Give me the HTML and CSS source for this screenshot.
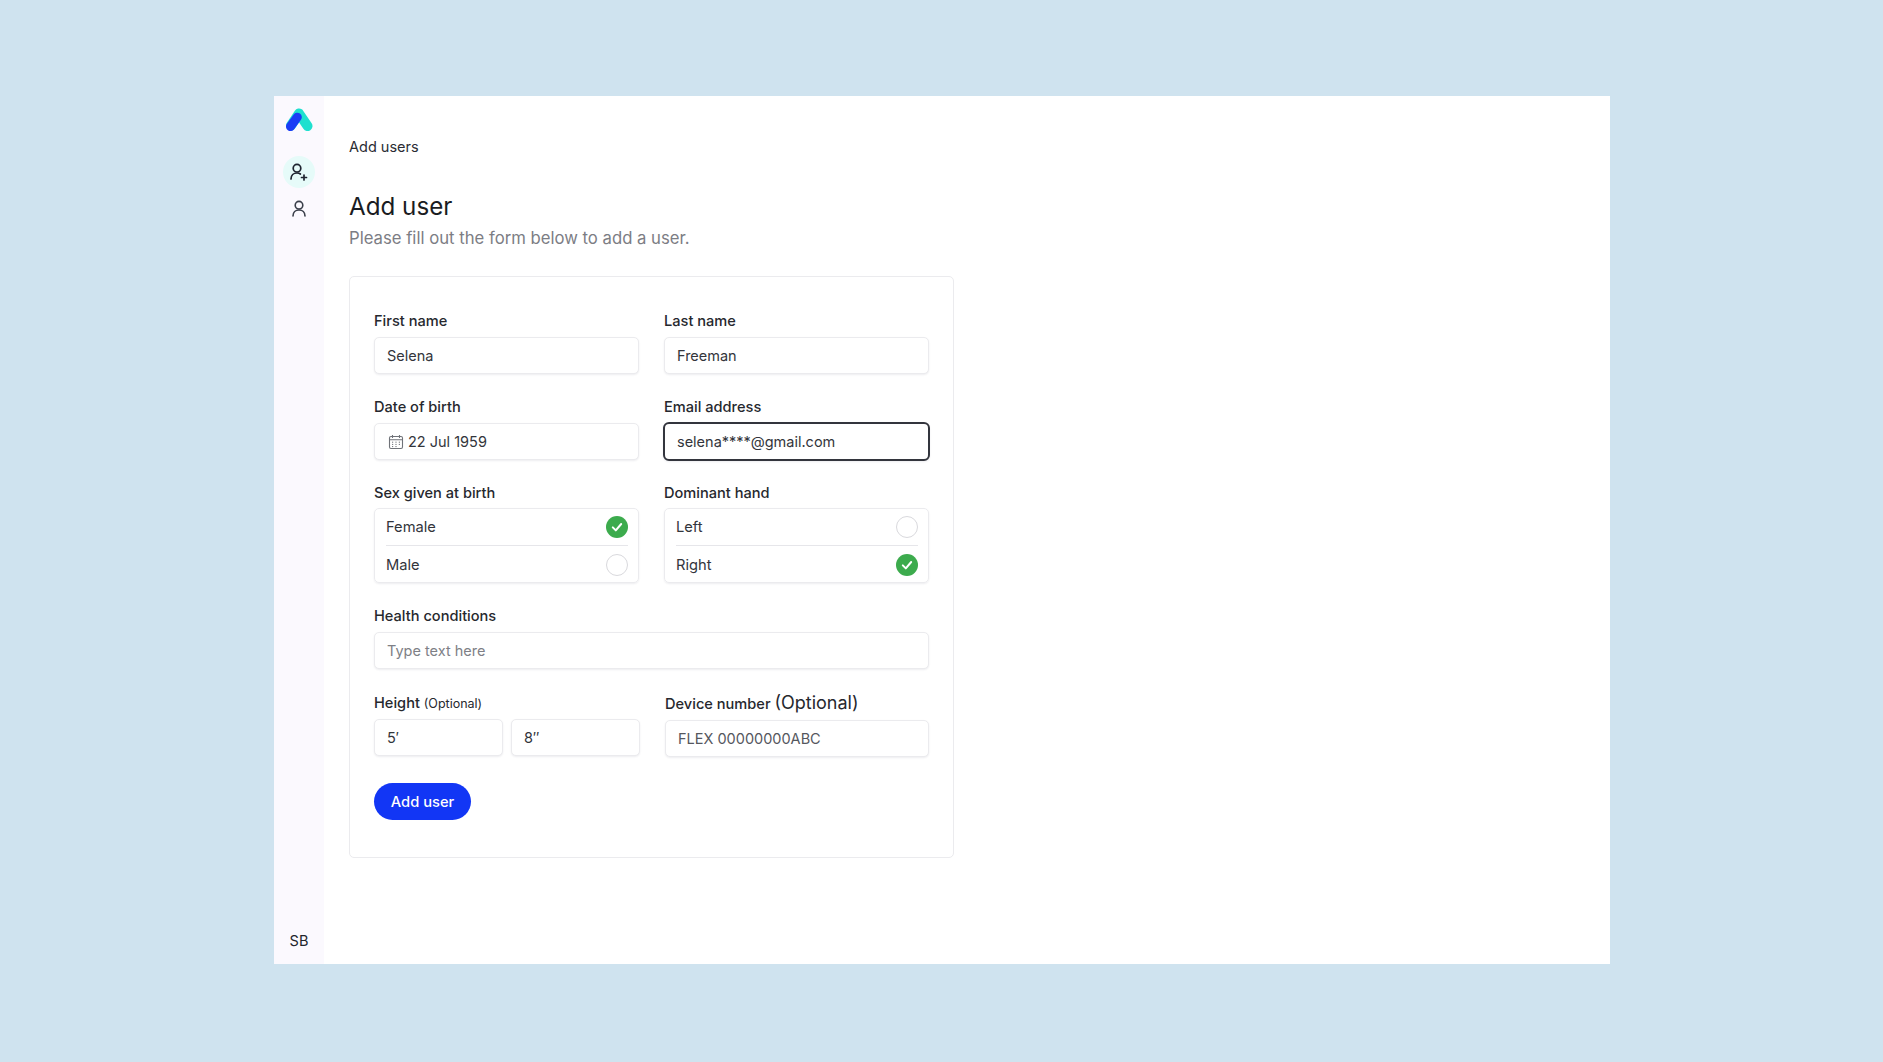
FILE: index.html
```html
<!DOCTYPE html>
<html lang="en">
<head>
<meta charset="utf-8">
<title>Add users</title>
<link rel="stylesheet" href="styles.css">
</head>
<body>
<div class="app">
  <aside class="sidebar">
    <svg class="logo" viewBox="0 0 28 24" width="28" height="24">
      <path d="M6 17.5 14 5.5 22.5 18" fill="none" stroke="#1fe0cf" stroke-width="10" stroke-linecap="round" stroke-linejoin="round"/>
      <path d="M5.5 18.5 12.3 9.2" fill="none" stroke="#1a3cf5" stroke-width="9" stroke-linecap="round"/>
    </svg>
    <div class="nav-item active">
      <svg viewBox="0 0 20 20" width="20" height="20" fill="none" stroke="#1f2430" stroke-width="1.7" stroke-linecap="round">
        <circle cx="8" cy="6.2" r="3.8"/>
        <path d="M2 17c0-3.8 2.6-6 6-6 1.3 0 2.5.3 3.4 1"/>
        <path d="M15 13v5M12.5 15.5h5"/>
      </svg>
    </div>
    <div class="nav-item">
      <svg viewBox="0 0 20 20" width="20" height="20" fill="none" stroke="#3a3f4a" stroke-width="1.6" stroke-linecap="round">
        <circle cx="10" cy="6.2" r="3.8"/>
        <path d="M4 17c0-3.8 2.6-6 6-6s6 2.2 6 6"/>
      </svg>
    </div>
    <div class="initials">SB</div>
  </aside>
  <main class="main">
    <div class="crumb">Add users</div>
    <h1 class="title">Add user</h1>
    <p class="subtitle">Please fill out the form below to add a user.</p>
    <form class="card">
      <div class="grid">
        <div class="field">
          <div class="label">First name</div>
          <div class="input">Selena</div>
        </div>
        <div class="field">
          <div class="label">Last name</div>
          <div class="input">Freeman</div>
        </div>
        <div class="field">
          <div class="label">Date of birth</div>
          <div class="input date">
            <svg viewBox="0 0 16 16" width="16" height="16" fill="none" stroke="#6f7278" stroke-width="1.1">
              <rect x="1.5" y="2.5" width="13" height="12" rx="1.5"/>
              <path d="M1.5 5.8h13M4.5 1v3M11.5 1v3"/>
              <path d="M4 8.2h1.2M7.4 8.2h1.2M10.8 8.2H12M4 10.4h1.2M7.4 10.4h1.2M10.8 10.4H12M4 12.6h1.2M7.4 12.6h1.2" stroke-width="1"/>
            </svg>
            <span>22 Jul 1959</span>
          </div>
        </div>
        <div class="field">
          <div class="label">Email address</div>
          <div class="input focused">selena****@gmail.com</div>
        </div>
        <div class="field">
          <div class="label">Sex given at birth</div>
          <div class="radio-group">
            <div class="radio-row"><span>Female</span><span class="radio checked"><svg viewBox="0 0 22 22" width="22" height="22"><path d="M6.8 11.4l3 3 5.4-6.4" fill="none" stroke="#fff" stroke-width="2" stroke-linecap="round" stroke-linejoin="round"/></svg></span></div>
            <div class="radio-row"><span>Male</span><span class="radio"></span></div>
          </div>
        </div>
        <div class="field">
          <div class="label">Dominant hand</div>
          <div class="radio-group">
            <div class="radio-row"><span>Left</span><span class="radio"></span></div>
            <div class="radio-row"><span>Right</span><span class="radio checked"><svg viewBox="0 0 22 22" width="22" height="22"><path d="M6.8 11.4l3 3 5.4-6.4" fill="none" stroke="#fff" stroke-width="2" stroke-linecap="round" stroke-linejoin="round"/></svg></span></div>
          </div>
        </div>
        <div class="field wide">
          <div class="label">Health conditions</div>
          <div class="input placeholder">Type text here</div>
        </div>
        <div class="field last">
          <div class="label">Height <small class="opt-small">(Optional)</small></div>
          <div class="pair">
            <div class="input">5′</div>
            <div class="input">8″</div>
          </div>
        </div>
        <div class="field last device">
          <div class="label tall">Device number <span class="opt-big">(Optional)</span></div>
          <div class="input muted">FLEX 00000000ABC</div>
        </div>
      </div>
      <button class="submit" type="button">Add user</button>
    </form>
  </main>
</div>
</body>
</html>
```
FILE: styles.css
```css
* { box-sizing: border-box; }
html, body { margin: 0; height: 100%; }
body {
  background: #cfe3ef;
  font-family: Inter, "Liberation Sans", sans-serif;
  color: #1f2128;
  padding: 96px 273px 98px 274px;
}
.app { display: flex; height: 868px; background: #fff; }
.sidebar {
  width: 50px;
  flex: none;
  background: #fbf9fe;
  display: flex;
  flex-direction: column;
  align-items: center;
  padding-top: 12px;
}
.logo { display: block; margin-bottom: 24px; }
.nav-item {
  width: 32px;
  height: 32px;
  border-radius: 50%;
  display: flex;
  align-items: center;
  justify-content: center;
  margin-bottom: 5px;
}
.nav-item.active { background: #e6fbf9; }
.initials { margin-top: auto; margin-bottom: 14px; font-size: 14.5px; line-height: 18px; color: #22252c; }
.main { flex: 1; padding: 0 0 0 25px; }
.crumb { margin-top: 42px; font-size: 14.5px; line-height: 18px; color: #2a2c33; }
.title { margin: 33px 0 0; font-size: 24.2px; font-weight: 400; line-height: 36px; color: #1a1c22; }
.subtitle { margin: 2px 0 0; font-size: 16.7px; line-height: 22px; color: #7c7d84; }
.card {
  width: 605px;
  height: 582px;
  margin-top: 27px;
  border: 1px solid #ebebee;
  border-radius: 5px;
  padding: 35px 24px 0 24px;
}
.grid { display: grid; grid-template-columns: 1fr 1fr; column-gap: 25px; row-gap: 24px; }
.wide { grid-column: 1 / -1; }
.last { margin-top: 1px; }
.label { font-size: 14.6px; font-weight: 500; line-height: 19px; margin-bottom: 6px; color: #26282e; }
.label.tall { white-space: nowrap; line-height: 18px; margin-bottom: 7px; }
.opt-small { font-size: 12.5px; font-weight: 400; }
.opt-big { font-size: 18px; font-weight: 400; }
.device { margin-left: 1px; }
.device .input { margin-top: 1px; }
.input {
  height: 37px;
  border: 1px solid #ebebee;
  border-radius: 5px;
  box-shadow: 0 1px 2px rgba(30, 30, 60, .08);
  background: #fff;
  padding: 0 12px;
  display: flex;
  align-items: center;
  font-size: 14.5px;
  color: #33353b;
}
.date { gap: 4px; padding-left: 13px; }
.date svg { flex: none; }
.focused { border: 2px solid #33353d; border-radius: 6px; margin: -1px; height: 39px; padding: 0 12px; width: calc(100% + 2px); }
.placeholder { color: #7e7f86; }
.muted { color: #55575e; }
.pair { display: grid; grid-template-columns: 1fr 1fr; gap: 8px; margin-right: -1px; }
.radio-group {
  border: 1px solid #ebebee;
  border-radius: 5px;
  box-shadow: 0 1px 2px rgba(30, 30, 60, .08);
  padding: 0 10px 0 11px;
  height: 75px;
  margin-top: -1px;
}
.radio-row {
  display: flex;
  align-items: center;
  justify-content: space-between;
  height: 37px;
  font-size: 14.7px;
  color: #33353b;
}
.radio-row:first-child { border-bottom: 1px solid #e6e6ea; }
.radio {
  width: 22px;
  height: 22px;
  border-radius: 50%;
  border: 1px solid #d9d9dd;
  display: block;
}
.radio.checked { border: 0; background: #3cab4d; }
.radio svg { display: block; }
.submit {
  display: block;
  margin-top: 26px;
  width: 97px;
  height: 37px;
  border: 0;
  border-radius: 19px;
  background: #1236f5;
  color: #fff;
  font: 500 14.7px Inter, "Liberation Sans", sans-serif;
}
```
